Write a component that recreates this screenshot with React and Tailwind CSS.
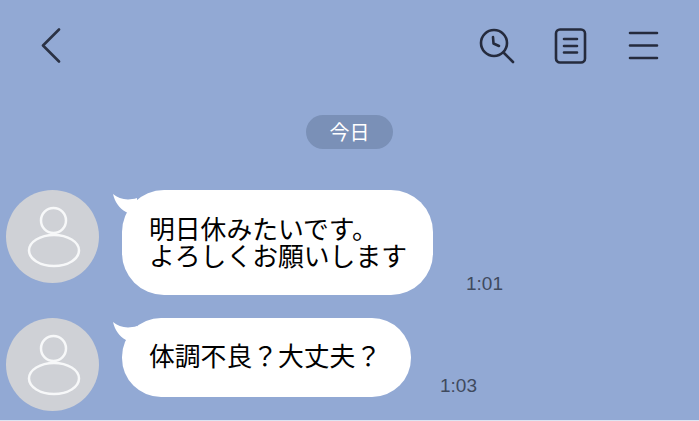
const font = { fontFamily: '"Noto Sans CJK JP", sans-serif' };

function Avatar() {
  return (
    <div className="w-[93px] h-[93px] shrink-0 rounded-full bg-[#cfd1d6] flex items-center justify-center">
      <svg width="93" height="93" viewBox="0 0 93 93" fill="none" stroke="#f7f8f9" strokeWidth="2.5">
        <circle cx="47.5" cy="30.5" r="12.5" />
        <ellipse cx="48" cy="60.5" rx="25" ry="15.5" />
      </svg>
    </div>
  );
}

function Tail() {
  return (
    <svg className="absolute left-[-9px] top-[4px]" width="30" height="26" viewBox="0 0 30 26">
      <path d="M0 0 C6 5 14 7 24 4 L24 24 L13 18 C6 14 2 8 0 0 Z" fill="#ffffff" />
    </svg>
  );
}

function Message({ lines, time, rowClass, bubbleClass, timeClass }) {
  return (
    <div className={`flex items-start pl-[6px] ${rowClass}`}>
      <Avatar />
      <div className={`relative ml-[23px] bg-white pl-[27px] ${bubbleClass}`}>
        <Tail />
        <p className="relative text-[25.8px] leading-[27px] text-black whitespace-nowrap" style={font}>
          {lines.map((l) => (
            <span key={l} className="block">{l}</span>
          ))}
        </p>
      </div>
      <span className={`text-[19px] leading-none text-[#3f4a5e] ${timeClass}`} style={{ fontFamily: '"Liberation Sans", sans-serif' }}>{time}</span>
    </div>
  );
}

export default function App() {
  return (
    <div className="w-[699px] h-[421px] overflow-hidden bg-[#92a9d4] flex flex-col">
      <div className="h-[115px] shrink-0 flex items-start pt-[28px] pl-[41px] pr-[39px] justify-between">
        <svg width="20" height="36" viewBox="0 0 20 36" fill="none" stroke="#2b3245" strokeWidth="2.6" strokeLinecap="round" strokeLinejoin="round">
          <path d="M18 1.5 L2 17.5 L18 33.5" />
        </svg>
        <div className="flex items-start gap-[39px]">
          <svg width="36" height="36" viewBox="0 0 36 36" fill="none" stroke="#252b3d" strokeWidth="2.6" strokeLinecap="round" strokeLinejoin="round">
            <circle cx="15" cy="15" r="13" />
            <path d="M24.5 24.5 L34 34" />
            <path d="M14 9 L14.5 15.5 L20 18" />
          </svg>
          <svg width="33" height="36" viewBox="0 0 33 36" fill="none" stroke="#252b3d" strokeWidth="2.6" strokeLinecap="round">
            <rect x="2" y="1.5" width="29" height="33" rx="4" />
            <path d="M10 11 H23 M10 18 H23 M10 24.5 H23" />
          </svg>
          <svg width="32" height="36" viewBox="0 0 32 36" fill="none" stroke="#252b3d" strokeWidth="2.6" strokeLinecap="round" className="ml-[2px]">
            <path d="M2 5 H29 M2 17.5 H29 M2 30 H29" />
          </svg>
        </div>
      </div>

      <div className="flex justify-center">
        <span className="w-[87px] h-[34px] rounded-full bg-[#7a90b7] text-white text-[20px] flex items-center justify-center" style={font}>今日</span>
      </div>

      <Message
        rowClass="mt-[41px]"
        bubbleClass="w-[311px] h-[105px] rounded-[42px] pt-[24px]"
        lines={["明日休みたいです。", "よろしくお願いします"]}
        time="1:01"
        timeClass="ml-[33px] mt-[84px]"
      />
      <Message
        rowClass="mt-[23px]"
        bubbleClass="w-[289px] h-[79px] rounded-[39px] pt-[23px]"
        lines={["体調不良？大丈夫？"]}
        time="1:03"
        timeClass="ml-[29px] mt-[58px]"
      />
      <div className="mt-auto h-px shrink-0 bg-[#dde4f2]" />
    </div>
  );
}
